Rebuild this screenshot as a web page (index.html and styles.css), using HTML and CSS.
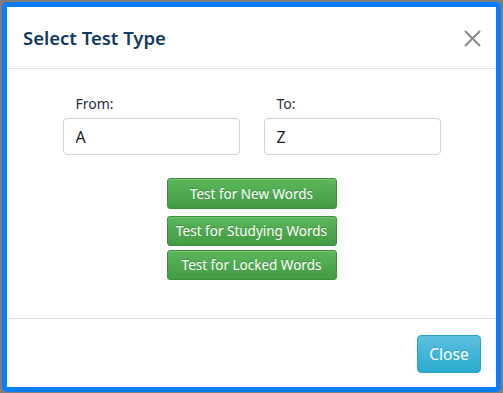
FILE: index.html
```html
<!DOCTYPE html>
<html lang="en">
<head>
<meta charset="utf-8">
<title>Select Test Type</title>
<link rel="stylesheet" href="styles.css">
</head>
<body>
<div class="modal">
  <div class="modal-header">
    <h4 class="modal-title">Select Test Type</h4>
    <button class="close" type="button" aria-label="Close">
      <svg width="17" height="17" viewBox="0 0 17 17"><path d="M1 1L16 16M16 1L1 16" stroke="#8a8a8a" stroke-width="2" fill="none"/></svg>
    </button>
  </div>
  <div class="modal-body">
    <div class="range">
      <div class="field">
        <label class="field-label">From:</label>
        <input class="field-input" type="text" value="A">
      </div>
      <div class="field">
        <label class="field-label">To:</label>
        <input class="field-input" type="text" value="Z">
      </div>
    </div>
    <div class="actions">
      <button class="btn-test btn-first" type="button">Test for New Words</button>
      <button class="btn-test btn-second" type="button">Test for Studying Words</button>
      <button class="btn-test" type="button">Test for Locked Words</button>
    </div>
  </div>
  <div class="modal-footer">
    <button class="btn-close" type="button">Close</button>
  </div>
</div>
</body>
</html>
```
FILE: styles.css
```css
html, body {
  margin: 0;
  padding: 0;
}
body {
  background: #7d7d7d;
  width: 503px;
  height: 393px;
  overflow: hidden;
  font-family: "Noto Sans", "Open Sans", sans-serif;
}
.modal {
  margin: 2px 0 0 2px;
  width: 499px;
  height: 390px;
  box-sizing: border-box;
  border: 5px solid #0a7dff;
  border-radius: 5px;
  background: #fff;
  display: flex;
  flex-direction: column;
}
.modal-header {
  height: 62px;
  box-sizing: border-box;
  border-bottom: 1px solid #e3e3e3;
  display: flex;
  align-items: center;
  justify-content: space-between;
  padding: 0 15px 0 16px;
}
.modal-title {
  margin: 0;
  font-size: 18.5px;
  font-weight: 600;
  color: #0f3a63;
  letter-spacing: 0;
}
.close {
  border: 0;
  background: none;
  padding: 0;
  width: 17px;
  height: 17px;
  display: flex;
  margin-top: 1px;
}
.modal-body {
  flex: 1;
  padding-top: 25px;
  box-sizing: border-box;
}
.range {
  display: flex;
  justify-content: center;
  gap: 24px;
}
.field {
  width: 177px;
  display: flex;
  flex-direction: column;
}
.field-label {
  font-size: 14px;
  line-height: 20px;
  color: #1f3040;
  padding-left: 13px;
  margin-bottom: 4px;
}
.field-input {
  height: 37px;
  box-sizing: border-box;
  border: 1px solid #cfd4da;
  border-radius: 4px;
  padding: 0 12px;
  font-family: inherit;
  font-size: 16px;
  color: #222;
  margin: 0;
}
.actions {
  display: flex;
  flex-direction: column;
  align-items: center;
  margin-top: 23px;
}
.btn-test {
  width: 170px;
  height: 30px;
  box-sizing: border-box;
  border: 1px solid #3e8f3e;
  border-radius: 3px;
  background: linear-gradient(#5cb85c, #439a43);
  color: #fff;
  font-family: inherit;
  font-size: 13.5px;
  padding: 0;
  text-shadow: 0 -1px 0 rgba(0,0,0,0.2);
  box-shadow: inset 0 1px 0 rgba(255,255,255,0.15);
}
.btn-first {
  margin-bottom: 7px;
  height: 31px;
}
.btn-second {
  margin-bottom: 4px;
}
.modal-footer {
  height: 69px;
  box-sizing: border-box;
  border-top: 1px solid #e3e3e3;
  display: flex;
  justify-content: flex-end;
  align-items: center;
  padding-right: 15px;
}
.btn-close {
  width: 64px;
  height: 38px;
  box-sizing: border-box;
  border: 1px solid #28a4c9;
  border-radius: 4px;
  background: linear-gradient(#5bc0de, #2aabd2);
  color: #fff;
  font-family: inherit;
  font-size: 15.5px;
  padding: 0;
  margin-top: 2px;
  text-shadow: 0 -1px 0 rgba(0,0,0,0.15);
}
```
